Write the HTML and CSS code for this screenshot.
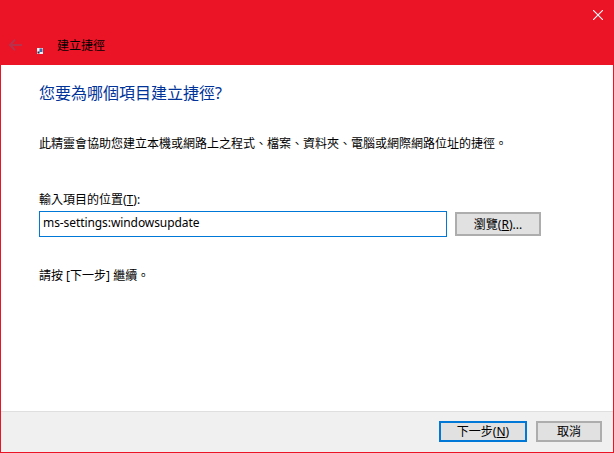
FILE: index.html
```html
<!DOCTYPE html>
<html lang="zh-Hant">
<head>
    <meta charset="UTF-8">
    <title>建立捷徑</title>
    <link rel="stylesheet" href="styles.css">
</head>
<body>
    <div class="window">
        <div class="header">
            <div class="title-row">
                <svg class="close-icon" width="10" height="10" viewBox="0 0 10 10">
                    <path d="M0 0L10 10M10 0L0 10" stroke="#fff" stroke-width="1.1" fill="none"/>
                </svg>
            </div>
            <div class="nav-row">
                <svg class="back-icon" width="13" height="12" viewBox="0 0 13 12">
                    <path d="M6 0.7L0.9 6L6 11.3M1 6H13" stroke="#b8324c" stroke-width="2" fill="none"/>
                </svg>
                <svg class="shortcut-icon" width="6" height="6" viewBox="0 0 6 6">
                    <rect width="6" height="6" fill="#eef1f6"/>
                    <rect x="2.5" y="0.5" width="3" height="3.5" fill="#3a6ea8"/>
                    <path d="M0.5 5.5V3.5H2.5V5.5Z" fill="#1d2b4a"/>
                </svg>
                <span class="nav-title">建立捷徑</span>
            </div>
        </div>
        <div class="content">
            <h1 class="heading">您要為哪個項目建立捷徑?</h1>
            <p class="intro">此精靈會協助您建立本機或網路上之程式、檔案、資料夾、電腦或網際網路位址的捷徑。</p>
            <label class="field-label" for="target">輸入項目的位置(<u>T</u>):</label>
            <div class="field-row">
                <input class="target-input" id="target" type="text" value="ms-settings:windowsupdate">
                <button class="btn browse-btn">瀏覽(<u>R</u>)...</button>
            </div>
            <p class="hint">請按 [下一步] 繼續。</p>
        </div>
        <div class="footer">
            <button class="btn next-btn">下一步(<u>N</u>)</button>
            <button class="btn cancel-btn">取消</button>
        </div>
    </div>
</body>
</html>
```

FILE: styles.css
```css
* {
    box-sizing: border-box;
}
html, body {
    margin: 0;
    height: 100%;
    overflow: hidden;
}
body {
    font-family: "Noto Sans", "Noto Sans CJK TC", sans-serif;
    font-size: 12px;
    color: #000;
    background: #fff;
}
.window {
    width: 614px;
    height: 453px;
    border: 1px solid #eb1326;
    border-top: 0;
    display: flex;
    flex-direction: column;
}
.header {
    height: 65px;
    margin: 0 -1px;
    background: #eb1326;
    flex: none;
}
.title-row {
    height: 38px;
    padding: 10px 11px 0 0;
    display: flex;
    justify-content: flex-end;
    align-items: flex-start;
}
.close-icon, .back-icon, .shortcut-icon {
    display: block;
    flex: none;
}
.nav-row {
    height: 16px;
    display: flex;
    align-items: center;
    padding-left: 9px;
}
.back-icon {
    margin-bottom: 2px;
}
.shortcut-icon {
    margin: 9px 14px 0 15px;
}
.nav-title {
    line-height: 16px;
}
.content {
    flex: 1;
    padding: 18px 0 0 38px;
}
.heading {
    margin: 0;
    font-size: 16px;
    font-weight: normal;
    line-height: 20px;
    color: #003399;
}
.intro {
    margin: 32px 0 0;
    line-height: 18px;
}
.field-label {
    display: block;
    margin-top: 38px;
    line-height: 18px;
}
.field-row {
    display: flex;
    align-items: center;
    margin-top: 2px;
}
.target-input {
    width: 408px;
    height: 26px;
    padding: 0 3px 3px;
    border: 1px solid #0078d7;
    outline: 0;
    font: inherit;
    letter-spacing: -0.08px;
    color: #000;
}
.btn {
    height: 21px;
    padding: 0;
    border: 2px solid #adadad;
    background: #e1e1e1;
    font: inherit;
    color: #000;
    line-height: 15px;
}
.browse-btn {
    width: 86px;
    height: 24px;
    margin-left: 8px;
}
.hint {
    margin: 30px 0 0;
    line-height: 18px;
}
.footer {
    height: 41px;
    flex: none;
    border-top: 1px solid #dfdfdf;
    background: #f0f0f0;
    display: flex;
    justify-content: flex-end;
    align-items: flex-start;
    gap: 9px;
    padding: 9px 11px 0 0;
}
.next-btn {
    width: 88px;
    border-color: #0078d7;
}
.cancel-btn {
    width: 66px;
}
```
